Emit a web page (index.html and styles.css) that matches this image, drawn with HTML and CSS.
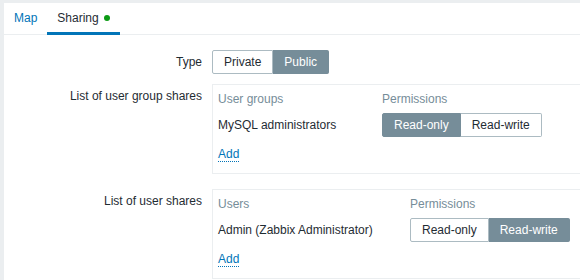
FILE: index.html
```html
<!DOCTYPE html>
<html lang="en">

  <head>
    <meta charset="UTF-8">
    <title>Map sharing</title>
    <link rel="stylesheet" href="styles.css">
  </head>

  <body>
    <div class="container">
      <ul class="tabs">
        <li class="tab"><a href="#">Map</a></li>
        <li class="tab active"><a href="#">Sharing<span class="dot"></span></a></li>
      </ul>

      <div class="form-grid">
        <label class="form-label">Type</label>
        <div class="form-field">
          <ul class="radio-list">
            <li>Private</li>
            <li class="checked">Public</li>
          </ul>
        </div>

        <label class="form-label">List of user group shares</label>
        <div class="form-field spaced">
          <div class="share-box">
            <table class="share-table groups">
              <tr>
                <th class="col-name">User groups</th>
                <th>Permissions</th>
              </tr>
              <tr class="row">
                <td>MySQL administrators</td>
                <td>
                  <ul class="radio-list">
                    <li class="checked">Read-only</li>
                    <li>Read-write</li>
                  </ul>
                </td>
              </tr>
              <tr class="add-row">
                <td colspan="2"><a class="link-action" href="#">Add</a></td>
              </tr>
            </table>
          </div>
        </div>

        <label class="form-label">List of user shares</label>
        <div class="form-field last">
          <div class="share-box">
            <table class="share-table users">
              <tr>
                <th class="col-name">Users</th>
                <th>Permissions</th>
              </tr>
              <tr class="row">
                <td>Admin (Zabbix Administrator)</td>
                <td>
                  <ul class="radio-list">
                    <li>Read-only</li>
                    <li class="checked">Read-write</li>
                  </ul>
                </td>
              </tr>
              <tr class="add-row">
                <td colspan="2"><a class="link-action" href="#">Add</a></td>
              </tr>
            </table>
          </div>
        </div>
      </div>
    </div>
  </body>

</html>
```

FILE: styles.css
```css
* {
  box-sizing: border-box;
}

body {
  margin: 0;
  background: #ebeef0;
  font-family: 'Liberation Sans', Arial, sans-serif;
  font-size: 12px;
  color: #1f2c33;
  overflow: hidden;
}

.container {
  margin: 3px 0 0 4px;
  height: 277px;
  background: #fff;
}

/* tabs */
.tabs {
  display: flex;
  margin: 0;
  padding: 0;
  list-style: none;
  border-bottom: 1px solid #ebeef0;
}

.tab {
  margin-bottom: -1px;
  border-bottom: 3px solid transparent;
}

.tab a {
  display: flex;
  align-items: center;
  padding: 8px 10px 7px;
  line-height: 14px;
  color: #0275b8;
  text-decoration: none;
}

.tab.active {
  border-bottom-color: #0275b8;
}

.tab.active a {
  color: #1f2c33;
}

.dot {
  width: 6px;
  height: 6px;
  margin-left: 5px;
  border-radius: 50%;
  background: #0c9a14;
}

/* form */
.form-grid {
  display: grid;
  grid-template-columns: 188px 1fr;
  column-gap: 10px;
  padding: 15px 0 0 10px;
}

.form-label {
  text-align: right;
  line-height: 24px;
}

.form-field {
  margin-bottom: 10px;
}

.form-field.spaced {
  margin-bottom: 15px;
}

.form-field.last {
  margin-bottom: 0;
}

.radio-list {
  display: inline-flex;
  margin: 0;
  padding: 0;
  list-style: none;
}

.radio-list li {
  height: 24px;
  line-height: 22px;
  padding: 0 11px;
  border: 1px solid #acbbc2;
  background: #fff;
  color: #1f2c33;
}

.radio-list li + li {
  border-left: none;
}

.radio-list li:first-child {
  border-radius: 2px 0 0 2px;
}

.radio-list li:last-child {
  border-radius: 0 2px 2px 0;
}

.radio-list li.checked {
  background: #768d99;
  border-color: #768d99;
  color: #fff;
}

/* share tables */
.share-box {
  border: 1px solid #ebeef0;
  border-right: none;
  padding: 5px;
  height: 90px;
}

.share-table {
  border-collapse: collapse;
}

.share-table th {
  text-align: left;
  font-weight: normal;
  color: #768d99;
  line-height: 18px;
  padding: 0;
}

.share-table td {
  padding: 0;
}

.groups .col-name {
  width: 164px;
}

.users .col-name {
  width: 192px;
}

.row td {
  padding-top: 5px;
  line-height: 23px;
}

.add-row td {
  padding-top: 8px;
  line-height: 18px;
}

.link-action {
  color: #0275b8;
  text-decoration: none;
  border-bottom: 1px dotted #0275b8;
}
```
